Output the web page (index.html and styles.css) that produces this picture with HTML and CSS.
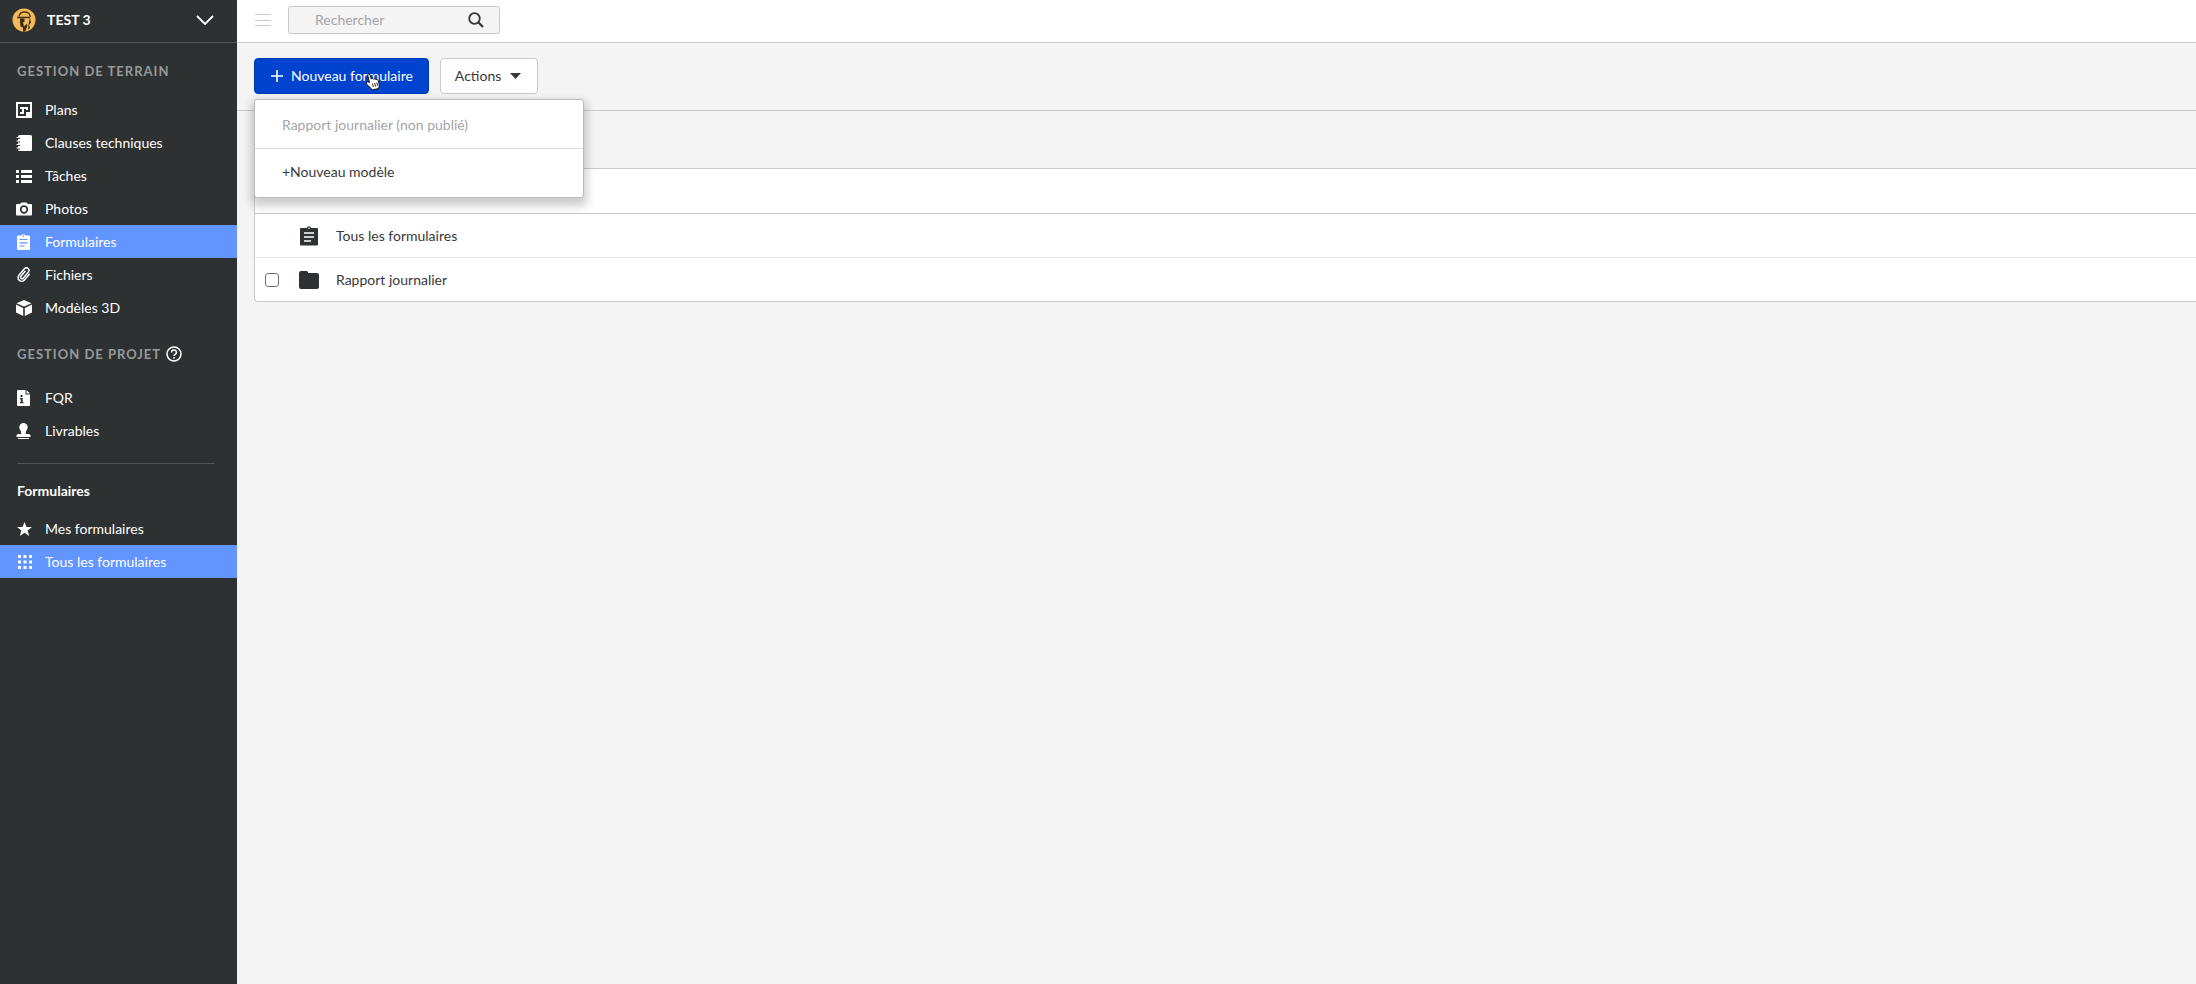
FILE: index.html
```html
<!DOCTYPE html>
<html lang="fr">

<head>
    <meta charset="UTF-8">
    <meta name="viewport" content="width=device-width, initial-scale=1.0">
    <title>Formulaires - TEST 3</title>
    <link rel="stylesheet" href="styles.css">
</head>

<body>
    <aside class="sidebar">
        <button class="project-switcher" type="button">
            <svg class="project-logo" viewBox="0 0 24 24">
                <circle cx="12" cy="12" r="11.5" fill="#f4b95a" />
                <path d="M7 8.500C7.500 5.500 9.500 4 12.500 4c3.500 0 5.500 2 5.800 5M5 9.500h13" fill="none" stroke="#4a3512" stroke-width="1.300" />
                <path d="M8 10.500h4.500v3l-1.500 1 1 4 2.500-2.500 1 1.500-2 5.500-2.500.5 0-4-2.500-1-.5-4zM18 9.500l1 5-2 2.500 1 3-2 1.500.5-5z" fill="#3a2e19" />
            </svg>
            <span class="project-name">TEST 3</span>
            <svg class="chevron" viewBox="0 0 18 10"><path d="M1 1l8 8 8-8" fill="none" stroke="#fff" stroke-width="1.800" /></svg>
        </button>

        <h2 class="section-title">Gestion de terrain</h2>
        <nav class="menu">
            <a href="#">
                <svg viewBox="0 0 16 16"><path d="M0 0h16v16H0zM2 2v12h8v-4h4V2z" fill="#fff" fill-rule="evenodd" /><path d="M4 5h8v3h-2V7H8v5H4v-2h2V7H4z" fill="#fff" /><path d="M11 11h5v5h-5z" fill="#fff" /></svg>
                Plans
            </a>
            <a href="#">
                <svg viewBox="0 0 16 16"><rect x="2" width="14" height="16" rx="1.500" fill="#fff" /><path d="M1 3.300h3M1 6.800h3M1 10.300h3M1 13.800h3" stroke="#2e3132" stroke-width="1.200" /><path d="M.5 2.500h3M.5 6h3M.5 9.500h3M.5 13h3" stroke="#fff" stroke-width="1" /></svg>
                Clauses techniques
            </a>
            <a href="#">
                <svg viewBox="0 0 16 16"><path d="M0 2h3v3H0zm5 0h11v3H5zM0 7h3v3H0zm5 0h11v3H5zM0 12h3v3H0zm5 0h11v3H5z" fill="#fff" /></svg>
                Tâches
            </a>
            <a href="#">
                <svg viewBox="0 0 16 16"><path d="M5.500 1.500h5L12 3h3q1 0 1 1v9.500q0 1-1 1H1q-1 0-1-1V4q0-1 1-1h3z" fill="#fff" /><circle cx="8" cy="8.500" r="3.300" fill="none" stroke="#2e3132" stroke-width="1.700" /></svg>
                Photos
            </a>
            <a class="active" href="#">
                <svg viewBox="0 0 16 16"><path d="M2 1.500h3.300a2.200 2.200 0 0 1 4 0H13q1 0 1 1V15q0 1-1 1H2q-1 0-1-1V2.500q0-1 1-1z" fill="#fff" /><path d="M3.500 5.500h8M3.500 8.800h8M3.500 12h5" stroke="#6295ff" stroke-width="1.200" /><circle cx="7.300" cy="2" r=".8" fill="#6295ff" /></svg>
                Formulaires
            </a>
            <a href="#">
                <svg viewBox="0 0 16 16"><path transform="rotate(40 8 8)" d="M11.500 4v7.500a3.600 3.600 0 0 1-7.200 0V3a2.600 2.600 0 0 1 5.200 0v8a1.500 1.500 0 0 1-3 0V4.500" fill="none" stroke="#fff" stroke-width="1.500" stroke-linecap="round" /></svg>
                Fichiers
            </a>
            <a href="#">
                <svg viewBox="0 0 16 16"><path d="M8 0l7.500 3.200L8 6.500.5 3.200zM0 4.500l7.200 3.400V16L0 12.500zM16 4.500L8.800 7.900V16l7.200-3.500z" fill="#fff" /></svg>
                Modèles 3D
            </a>
        </nav>

        <h2 class="section-title project-title">Gestion de projet
            <svg viewBox="0 0 16 16"><circle cx="8" cy="8" r="7" fill="none" stroke="#fff" stroke-width="1.500" /><path d="M5.600 6.400a2.400 2.400 0 1 1 3.500 2.100q-1.100.6-1.100 1.600" fill="none" stroke="#fff" stroke-width="1.500" /><path d="M7.200 11.200h1.600v1.600H7.200z" fill="#fff" /></svg>
        </h2>
        <nav class="menu">
            <a href="#">
                <svg viewBox="0 0 16 16"><path d="M2 0h7.500v4.500H14V15q0 1-1 1H2q-1 0-1-1V1q0-1 1-1zM10.500 0L14 3.500h-3.500z" fill="#fff" /><path d="M4.500 5h2v2h-2zM4 8h2.700v4H7.500v1.200H4V12h.8V9.200H4z" fill="#2e3132" /></svg>
                FQR
            </a>
            <a href="#">
                <svg viewBox="0 0 16 16"><path d="M7.500 0a4.200 4.200 0 0 1 4.200 4.200c0 2.300-2 3-2 6.800H13l1.500 1v2h-14v-2L2 11h3.300c0-3.800-2-4.500-2-6.800A4.200 4.200 0 0 1 7.500 0zM2 15h11v1H2z" fill="#fff" /></svg>
                Livrables
            </a>
        </nav>

        <hr class="divider">

        <h2 class="filter-title">Formulaires</h2>
        <nav class="menu">
            <a href="#">
                <svg viewBox="0 0 16 16"><path d="M8.500 1l2 5H16l-4.400 3.400 1.600 5.600-4.700-3.300L3.800 15l1.600-5.600L1 6h5.500z" fill="#fff" /></svg>
                Mes formulaires
            </a>
            <a class="active" href="#">
                <svg viewBox="0 0 16 16"><path d="M2 1h3v3H2zm5.500 0h3v3h-3zM13 1h3v3h-3zM2 6.500h3v3H2zm5.500 0h3v3h-3zm5.500 0h3v3h-3zM2 12h3v3H2zm5.500 0h3v3h-3zm5.500 0h3v3h-3z" fill="#fff" /></svg>
                Tous les formulaires
            </a>
        </nav>
    </aside>

    <main class="content">
        <header class="topbar">
            <button class="burger" type="button" aria-label="Menu">
                <svg viewBox="0 0 16 12"><path d="M0 .5h16M0 6.500h16M0 11.500h16" stroke="#cbcbcd" /></svg>
            </button>
            <form class="search">
                <input type="text" placeholder="Rechercher" aria-label="Rechercher">
                <button type="submit" aria-label="Lancer la recherche">
                    <svg viewBox="0 0 16 16"><circle cx="6.500" cy="6.500" r="5.300" fill="none" stroke="#38383a" stroke-width="1.800" /><path d="M10.300 10.300l4.700 4.700" stroke="#38383a" stroke-width="2.200" /></svg>
                </button>
            </form>
        </header>

        <div class="toolbar">
            <div class="dropdown">
                <button class="btn btn-primary" type="button">
                    <svg viewBox="0 0 12 12"><path d="M6 0v12M0 6h12" stroke="#fff" stroke-width="1.600" /></svg>
                    Nouveau formulaire
                </button>
                <div class="dropdown-menu">
                    <button type="button" disabled>Rapport journalier (non publié)</button>
                    <button type="button">+Nouveau modèle</button>
                </div>
                <svg class="cursor" viewBox="0 0 16 18"><path d="M4.500 9.500L2.800 2.600C2.400.8 4.400.3 5 2l1.300 4c.8-1 1.900-.8 2.300.2.800-.7 1.900-.5 2.300.5 1-.6 2-.1 2.300.9l.8 3c.6 2.400-.2 3.400-.5 4.900l-6.500 1.500c-1-2.300-3.400-3.700-5.500-6-1-1.200.6-2.600 1.800-1.900z" fill="#fff" stroke="#111" stroke-width="1" /><path d="M7.500 10.500l.9 3.500M9.700 10l.8 3.500M11.800 9.600l.7 3.200" stroke="#111" stroke-width=".9" /></svg>
            </div>
            <button class="btn" type="button">
                Actions
                <svg class="caret" viewBox="0 0 11 6"><path d="M0 0h11L5.500 6z" fill="#38383a" /></svg>
            </button>
        </div>

        <table class="forms">
            <thead>
                <tr>
                    <th class="check"><input type="checkbox" aria-label="Tout sélectionner"></th>
                    <th class="icon"></th>
                    <th></th>
                </tr>
            </thead>
            <tbody>
                <tr>
                    <td class="check"></td>
                    <td class="icon">
                        <svg viewBox="0 0 20 20"><path d="M2 2h5.800a2.300 2.300 0 0 1 4.400 0H18q1 0 1 1v15.500q0 1-1 1H2q-1 0-1-1V3q0-1 1-1z" fill="#2e3132" /><path d="M5 7h10M5 11h10M5 15h7" stroke="#fff" stroke-width="1.700" /><circle cx="10" cy="2.300" r=".8" fill="#fff" /></svg>
                    </td>
                    <td>Tous les formulaires</td>
                </tr>
                <tr>
                    <td class="check"><input type="checkbox" aria-label="Rapport journalier"></td>
                    <td class="icon">
                        <svg viewBox="0 0 20 20"><path d="M2 1h5.500q1 0 1.400 1l.4 1H18q2 0 2 2v12q0 2-2 2H2q-2 0-2-2V3q0-2 2-2z" fill="#2e3132" /></svg>
                    </td>
                    <td>Rapport journalier</td>
                </tr>
            </tbody>
        </table>
    </main>
</body>

</html>
```
FILE: styles.css
```css
* {
    box-sizing: border-box;
}

body {
    margin: 0;
    min-height: 100vh;
    display: flex;
    background: #f4f4f5;
    color: #38383a;
    font-family: Lato, "Liberation Sans", sans-serif;
    font-size: 14px;
    line-height: 20px;
}

button,
input {
    font: inherit;
    color: inherit;
}

button {
    cursor: pointer;
}

/* Sidebar */
.sidebar {
    flex: 0 0 237px;
    background: #2e3132;
    color: #fff;
}

.project-switcher {
    display: flex;
    align-items: center;
    width: 100%;
    height: 43px;
    padding: 0 23px 2px 12px;
    border: 0;
    border-bottom: 1px solid #515455;
    background: none;
    text-align: left;
}

.project-logo {
    width: 24px;
    height: 24px;
    margin-right: 11px;
}

.project-name {
    flex: 1;
    font-weight: bold;
}

.chevron {
    width: 18px;
    height: 10px;
}

.section-title {
    display: flex;
    align-items: center;
    gap: 5px;
    margin: 0;
    padding: 18px 17px 12px;
    color: #98999a;
    font-size: 13px;
    letter-spacing: 1px;
    text-transform: uppercase;
}

.section-title svg {
    width: 16px;
    height: 16px;
}

.project-title {
    padding-top: 20px;
    padding-bottom: 17px;
}

.menu a {
    display: flex;
    align-items: center;
    gap: 13px;
    height: 33px;
    padding: 0 16px;
    color: #fff;
    text-decoration: none;
}

.menu a.active {
    background: #6295ff;
}

.menu svg {
    width: 16px;
    height: 16px;
}

.divider {
    height: 1px;
    margin: 16px 22px 17px 17px;
    border: 0;
    background: #515455;
}

.filter-title {
    margin: 0;
    padding: 0 17px 11px;
    font-size: 14px;
}

/* Content */
.content {
    flex: 1;
    min-width: 0;
}

.topbar {
    display: flex;
    align-items: center;
    gap: 17px;
    height: 43px;
    padding: 0 18px 2px;
    border-bottom: 1px solid #cbcbcf;
    background: #fff;
}

.burger {
    padding: 0;
    border: 0;
    background: none;
}

.burger svg {
    display: block;
    width: 16px;
    height: 12px;
}

.search {
    display: flex;
    align-items: center;
    width: 212px;
    height: 28px;
    border: 1px solid #c8c8ca;
    border-radius: 3px;
    background: #f4f4f5;
}

.search input {
    flex: 1;
    min-width: 0;
    padding: 0 0 0 26px;
    border: 0;
    outline: 0;
    background: none;
}

.search input::placeholder {
    color: #a5a5a7;
}

.search button {
    padding: 0 15px;
    border: 0;
    background: none;
}

.search svg {
    display: block;
    width: 16px;
    height: 16px;
}

.toolbar {
    display: flex;
    gap: 11px;
    padding: 15px 17px 16px;
    border-bottom: 1px solid #cbcbcf;
}

.btn {
    display: flex;
    align-items: center;
    gap: 9px;
    height: 36px;
    padding: 0 16px 0 14px;
    border: 1px solid #cbcbcf;
    border-radius: 4px;
    background: #fff;
}

.btn-primary {
    gap: 8px;
    padding: 0 15px 0 16px;
    border-color: #023bb5;
    background: #0043ce;
    color: #fff;
}

.btn-primary svg {
    width: 12px;
    height: 12px;
}

.caret {
    width: 11px;
    height: 6px;
}

.dropdown {
    position: relative;
}

.dropdown-menu {
    position: absolute;
    top: 41px;
    left: 0;
    z-index: 1;
    width: 330px;
    padding: 2px 0 3px;
    border: 1px solid #bcbcbf;
    border-radius: 3px;
    background: #fff;
    box-shadow: 0 5px 10px 3px rgba(0, 0, 0, 0.2);
}

.dropdown-menu button {
    display: block;
    width: 100%;
    height: 46px;
    padding: 0 27px;
    border: 0;
    background: none;
    text-align: left;
}

.dropdown-menu button:disabled {
    color: #a5a5a7;
}

.dropdown-menu button + button {
    border-top: 1px solid #dcdcde;
}

.cursor {
    position: absolute;
    top: 15px;
    left: 111px;
    z-index: 2;
    width: 16px;
    height: 18px;
}

/* Forms list, bleeds off the right side */
.forms {
    width: calc(100% - 17px);
    margin: 57px 0 0 17px;
    border: 1px solid #cbcbcf;
    border-right: 0;
    border-radius: 4px 0 0 4px;
    border-spacing: 0;
    background: #fff;
    table-layout: fixed;
}

.forms th,
.forms td {
    height: 43px;
    padding: 0;
    text-align: left;
    vertical-align: middle;
}

.forms th {
    height: 45px;
    border-bottom: 1px solid #cbcbcf;
}

.forms tbody tr:first-child td {
    height: 44px;
    border-bottom: 1px solid #e4e4e6;
}

.forms .check {
    width: 44px;
    padding-left: 10px;
}

.forms .icon {
    width: 37px;
}

.forms svg {
    display: block;
    width: 20px;
    height: 20px;
}

.forms input {
    display: block;
    width: 14px;
    height: 14px;
    margin: 0;
    appearance: none;
    border: 1px solid #757577;
    border-radius: 3px;
    background: #fff;
}
```
